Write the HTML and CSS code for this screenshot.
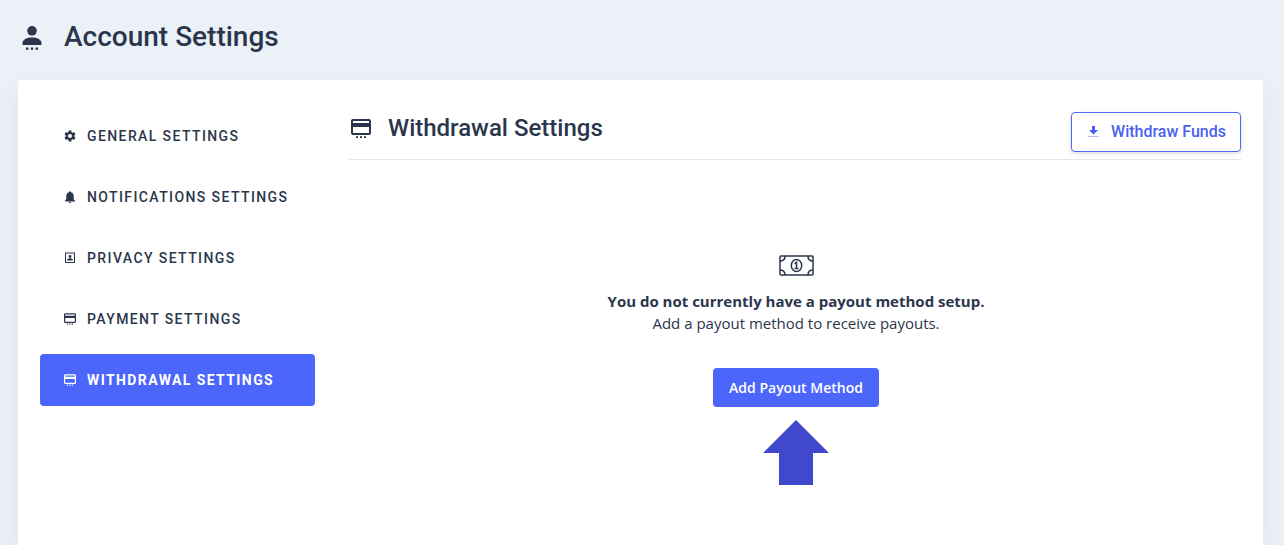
FILE: index.html
```html
<!DOCTYPE html>
<html lang="en">
<head>
<meta charset="utf-8">
<meta name="viewport" content="width=device-width, initial-scale=1">
<title>Account Settings</title>
<link rel="stylesheet" href="styles.css">
</head>
<body>
<svg class="sprite" aria-hidden="true">
  <symbol id="card" viewBox="0 0 20 19">
    <path fill-rule="evenodd" d="M2 0h16a2 2 0 0 1 2 2v12a2 2 0 0 1-2 2H2a2 2 0 0 1-2-2V2a2 2 0 0 1 2-2zM2 2v2h16V2zM2 8v6h16V8zM5 17.200h2V19H5zM9 17.200h2V19H9zM13 17.200h2V19h-2z"/>
  </symbol>
</svg>
<header class="page-head">
  <svg class="page-icon" viewBox="0 0 20 24" aria-hidden="true">
    <circle cx="10" cy="4.800" r="4.800"/>
    <path d="M.5 19v-2c0-3.500 4.500-5.500 9.500-5.500s9.500 2 9.500 5.500v2zM4 21.500h2.400v2.300H4zM8.800 21.500h2.400v2.300H8.800zM13.600 21.500H16v2.300h-2.400z"/>
  </svg>
  <h1>Account Settings</h1>
</header>
<div class="panel">
  <nav class="side" aria-label="Settings">
    <a href="#general"><svg viewBox="0 0 24 24" aria-hidden="true"><path fill-rule="evenodd" d="M20.400 13.200a8 8 0 0 0 0-2.400l2.600-2-2.700-4.600-3.100 1.300-2-1.200L14.700 1H9.300l-.5 3.300-2 1.200-3.100-1.300L1 8.800l2.600 2a8 8 0 0 0 0 2.400l-2.600 2 2.700 4.600 3.100-1.300 2 1.200.5 3.300h5.400l.5-3.300 2-1.200 3.100 1.300 2.700-4.600zM12 16a4 4 0 1 1 0-8 4 4 0 0 1 0 8z"/></svg>General Settings</a>
    <a href="#notifications"><svg viewBox="0 0 24 24" aria-hidden="true"><path d="M10 2.500a2 2 0 0 1 4 0C18 3.500 19.500 7 19.500 11v5.500l2.500 3V21H2v-1.500l2.500-3V11C4.500 7 6 3.500 10 2.500zM9.500 22h5a2.500 2 0 0 1-5 0z"/></svg>Notifications Settings</a>
    <a href="#privacy"><svg viewBox="0 0 24 24" aria-hidden="true"><path fill-rule="evenodd" d="M2 1h20v21H2zM4 3v17h16V3z"/><circle cx="12" cy="9" r="2.800"/><path d="M6.500 17v-1.500c0-4 11-4 11 0V17z"/></svg>Privacy Settings</a>
    <a href="#payment"><svg aria-hidden="true"><use href="#card"/></svg>Payment Settings</a>
    <a href="#withdrawal" class="active" aria-current="page"><svg aria-hidden="true"><use href="#card"/></svg>Withdrawal Settings</a>
  </nav>
  <main class="content">
    <div class="content-head">
      <div class="heading">
        <svg class="heading-icon" aria-hidden="true"><use href="#card"/></svg>
        <h2>Withdrawal Settings</h2>
      </div>
      <button type="button" class="btn outline">
        <svg viewBox="0 0 12 12" aria-hidden="true"><path d="M4 0h3v4h3L5.500 8.500 1 4h3z"/><path opacity=".4" d="M0 10h11v1H0z"/></svg>
        Withdraw Funds
      </button>
    </div>
    <section class="empty">
      <svg class="bill" viewBox="0 0 36 22" aria-hidden="true">
        <rect x="2" y="1" width="33" height="19" rx="1"/>
        <path d="M2 6c3 0 5-2 5-5M30 1c0 3 2 5 5 5M2 15c3 0 5 2 5 5M30 20c0-3 2-5 5-5"/>
        <ellipse cx="18.500" cy="10.500" rx="5.200" ry="6"/>
        <path d="M16.500 8.800l2-1.500v6M16.500 13.500h4"/>
      </svg>
      <p class="lead">You do not currently have a payout method setup.</p>
      <p class="note">Add a payout method to receive payouts.</p>
      <div class="action">
        <button type="button" class="btn primary">Add Payout Method</button>
        <svg class="arrow" viewBox="0 0 66 65" aria-hidden="true"><path d="M33 0l33 33H50v32H16V33H0z"/></svg>
      </div>
    </section>
  </main>
</div>
</body>
</html>
```
FILE: styles.css
```css
* { box-sizing: border-box; }
body {
  margin: 0;
  min-height: 100vh;
  padding: 0 21px 0 18px;
  display: flex;
  flex-direction: column;
  background: #ecf1f8;
  color: #2b364c;
  font-family: Roboto, "Liberation Sans", sans-serif;
}
svg { fill: currentColor; flex: none; }
h1, h2, p { margin: 0; }
.sprite { position: absolute; width: 0; height: 0; }
.page-head {
  display: flex;
  align-items: center;
  gap: 22px;
  height: 80px;
  padding: 0 4px 7px;
}
.page-icon { width: 20px; height: 24px; margin-top: 2px; }
h1 { font-size: 28px; line-height: 36px; font-weight: 500; }
.panel {
  flex: 1;
  display: grid;
  grid-template-columns: 275px 1fr;
  gap: 34px;
  padding: 30px 22px 60px;
  background: #fff;
  border-radius: 4px 4px 0 0;
  box-shadow: 0 12px 28px rgba(40, 60, 100, 0.08);
}
.side { display: flex; flex-direction: column; gap: 9px; }
.side a {
  display: flex;
  align-items: center;
  gap: 11px;
  height: 52px;
  padding: 0 24px;
  border-radius: 4px;
  color: inherit;
  font-size: 14px;
  font-weight: 500;
  letter-spacing: 0.1em;
  text-transform: uppercase;
  text-decoration: none;
  white-space: nowrap;
}
.side svg { width: 12px; height: 12px; }
.side .active { background: #4c66fb; color: #fff; font-weight: 700; }
.content-head {
  display: flex;
  justify-content: space-between;
  align-items: flex-start;
  padding: 2px 0 7px;
  border-bottom: 1px solid #e3e6ea;
}
.heading { display: flex; align-items: center; gap: 17px; padding-left: 2px; }
.heading-icon { width: 20px; height: 19px; }
h2 { font-size: 24px; line-height: 32px; font-weight: 500; }
.btn { border-radius: 4px; font-weight: 500; cursor: pointer; white-space: nowrap; }
.outline {
  display: flex;
  align-items: center;
  gap: 11px;
  height: 40px;
  padding: 0 14px 0 16px;
  border: 1px solid #4c66fb;
  background: #fff;
  color: #4c5ff0;
  font: 500 16px/24px Roboto, "Liberation Sans", sans-serif;
  box-shadow: 0 2px 5px rgba(0, 0, 0, 0.12);
}
.outline svg { width: 12px; height: 12px; }
.empty {
  display: flex;
  flex-direction: column;
  align-items: center;
  padding: 95px 0 0 2px;
  text-align: center;
  font: 15px/22px "Open Sans", "Noto Sans", sans-serif;
}
.bill { width: 36px; height: 22px; margin-bottom: 13px; fill: none; stroke: currentColor; stroke-width: 1.5; }
.lead { font-weight: 700; }
.action { display: flex; flex-direction: column; align-items: center; gap: 13px; margin-top: 34px; }
.primary {
  height: 39px;
  padding: 0 16px;
  border: 0;
  background: #4c66fb;
  color: #fff;
  font: 600 14px/22px "Open Sans", "Noto Sans", sans-serif;
}
.arrow { width: 66px; height: 65px; fill: #4048cc; }
```
